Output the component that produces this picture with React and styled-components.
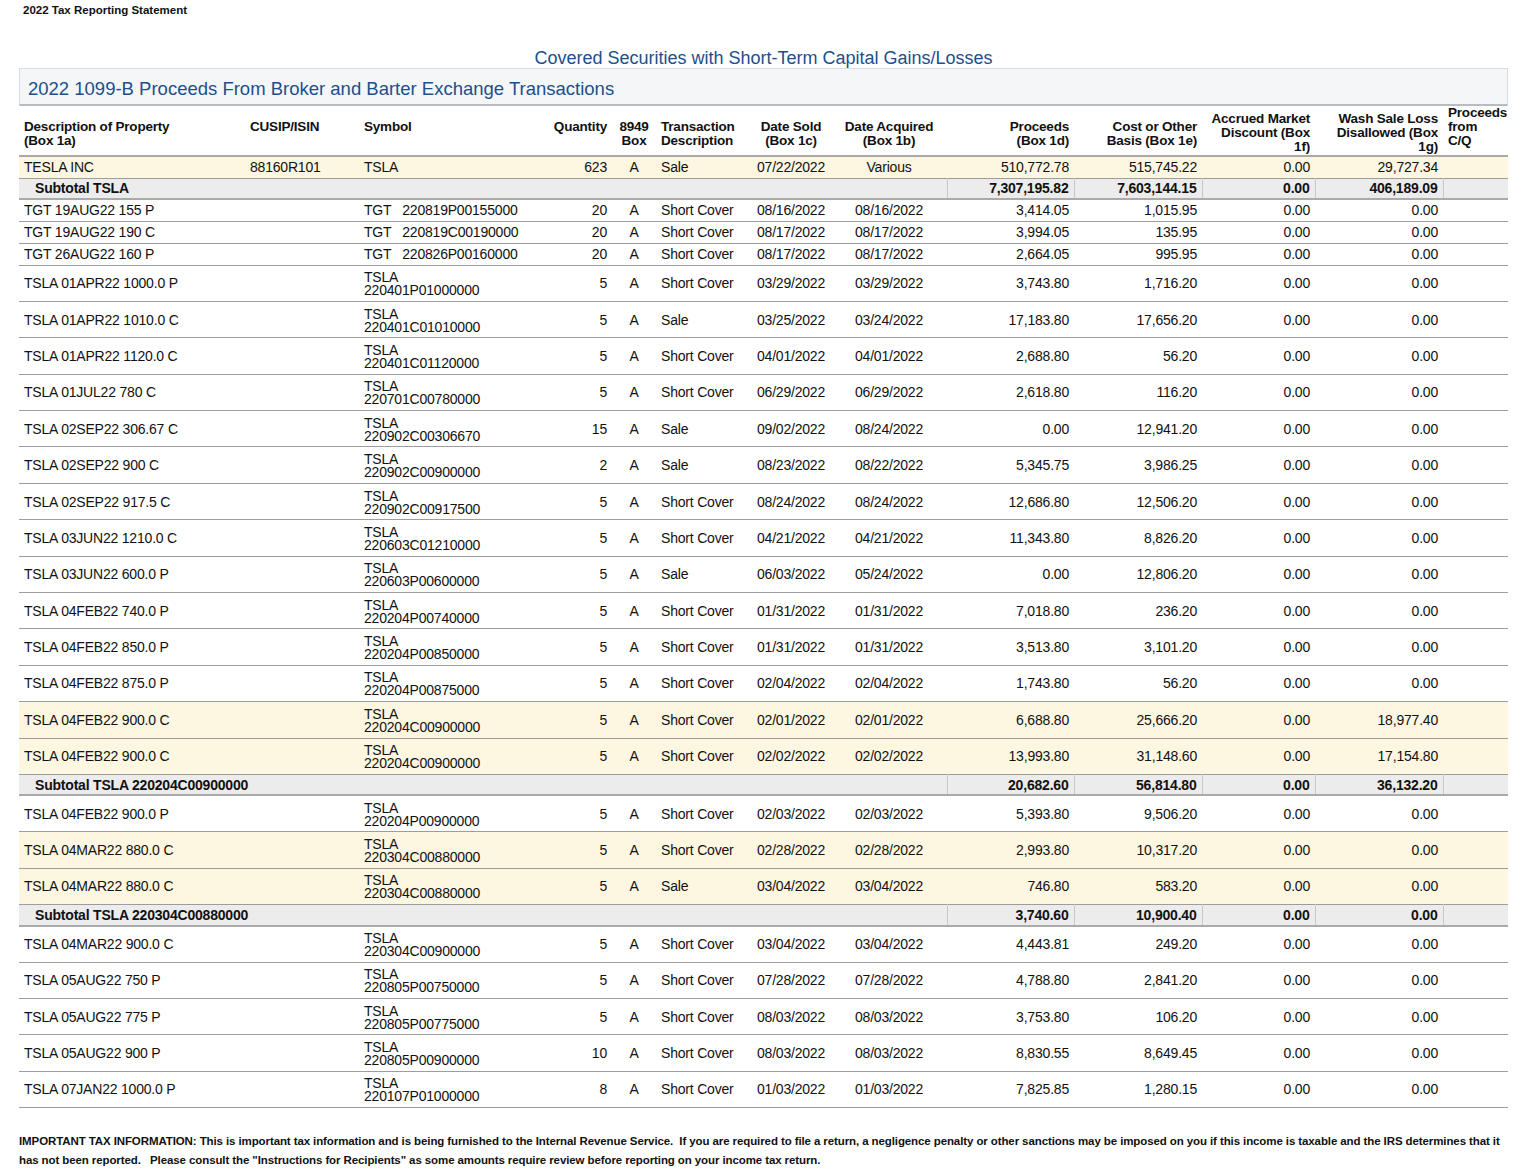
import React from "react";
import styled, { createGlobalStyle } from "styled-components";

const G = createGlobalStyle`
  body { margin: 0; background: #fff; font-family: "Liberation Sans", Arial, sans-serif; color: #111; }
`;
const Page = styled.div`width: 1536px; padding: 0 28px 0 19px; box-sizing: border-box;`;
const Top = styled.div`font-size: 11.5px; font-weight: bold; padding: 4px 0 0 4px; height: 44px; box-sizing: border-box;`;
const Covered = styled.div`text-align: center; color: #1c4f8c; font-size: 18px; height: 24px; line-height: 28px;`;
const Banner = styled.div`
  background: #f4f6f8; border: 1px solid #d8dde2; border-bottom: 2px solid #b8bcc0;
  color: #1c4f8c; font-size: 18.5px; padding: 8px 8px 3px; height: 24px; line-height: 24px;
`;
const Table = styled.table`
  width: 100%; border-collapse: collapse; table-layout: fixed; font-size: 14px; letter-spacing: -0.2px;
`;
const Th = styled.th`
  font-weight: bold; font-size: 13.5px; line-height: 14px; text-align: ${p => p.$a || "left"};
  vertical-align: bottom; padding: 0 5px 7px; height: 38px; border-bottom: 2px solid #aaa;
  ${p => p.$mid && "vertical-align: middle;"}
`;
const Tr = styled.tr`
  background: ${p => p.$hl ? "#fdf6e1" : p.$sub ? "#ececec" : "#fff"};
  height: ${p => p.$h}px;
  border-bottom: ${p => p.$sub ? "2px solid #aaa" : "1px solid #9d9d9d"};
  font-weight: ${p => p.$sub ? "bold" : "normal"};
`;
const Td = styled.td`
  padding: 0 5px; text-align: ${p => p.$a || "left"}; white-space: nowrap; vertical-align: middle;
  ${p => p.$bl && "border-left: 1px solid #c8c8c8;"}
`;
const Sym = styled.div`line-height: 13px; padding-top: 2px;`;
const Foot = styled.div`font-size: 11.5px; font-weight: bold; line-height: 19px; margin-top: 24px; letter-spacing: -0.1px;`;

const rows = [
  ["TGT 19AUG22 155 P","TGT   220819P00155000","20","Short Cover","08/16/2022","08/16/2022","3,414.05","1,015.95","0.00"],
  ["TGT 19AUG22 190 C","TGT   220819C00190000","20","Short Cover","08/17/2022","08/17/2022","3,994.05","135.95","0.00"],
  ["TGT 26AUG22 160 P","TGT   220826P00160000","20","Short Cover","08/17/2022","08/17/2022","2,664.05","995.95","0.00"],
  ["TSLA 01APR22 1000.0 P","220401P01000000","5","Short Cover","03/29/2022","03/29/2022","3,743.80","1,716.20","0.00"],
  ["TSLA 01APR22 1010.0 C","220401C01010000","5","Sale","03/25/2022","03/24/2022","17,183.80","17,656.20","0.00"],
  ["TSLA 01APR22 1120.0 C","220401C01120000","5","Short Cover","04/01/2022","04/01/2022","2,688.80","56.20","0.00"],
  ["TSLA 01JUL22 780 C","220701C00780000","5","Short Cover","06/29/2022","06/29/2022","2,618.80","116.20","0.00"],
  ["TSLA 02SEP22 306.67 C","220902C00306670","15","Sale","09/02/2022","08/24/2022","0.00","12,941.20","0.00"],
  ["TSLA 02SEP22 900 C","220902C00900000","2","Sale","08/23/2022","08/22/2022","5,345.75","3,986.25","0.00"],
  ["TSLA 02SEP22 917.5 C","220902C00917500","5","Short Cover","08/24/2022","08/24/2022","12,686.80","12,506.20","0.00"],
  ["TSLA 03JUN22 1210.0 C","220603C01210000","5","Short Cover","04/21/2022","04/21/2022","11,343.80","8,826.20","0.00"],
  ["TSLA 03JUN22 600.0 P","220603P00600000","5","Sale","06/03/2022","05/24/2022","0.00","12,806.20","0.00"],
  ["TSLA 04FEB22 740.0 P","220204P00740000","5","Short Cover","01/31/2022","01/31/2022","7,018.80","236.20","0.00"],
  ["TSLA 04FEB22 850.0 P","220204P00850000","5","Short Cover","01/31/2022","01/31/2022","3,513.80","3,101.20","0.00"],
  ["TSLA 04FEB22 875.0 P","220204P00875000","5","Short Cover","02/04/2022","02/04/2022","1,743.80","56.20","0.00"],
  ["TSLA 04FEB22 900.0 C","220204C00900000","5","Short Cover","02/01/2022","02/01/2022","6,688.80","25,666.20","18,977.40",1],
  ["TSLA 04FEB22 900.0 C","220204C00900000","5","Short Cover","02/02/2022","02/02/2022","13,993.80","31,148.60","17,154.80",1],
  ["SUB","Subtotal TSLA  220204C00900000","20,682.60","56,814.80","36,132.20"],
  ["TSLA 04FEB22 900.0 P","220204P00900000","5","Short Cover","02/03/2022","02/03/2022","5,393.80","9,506.20","0.00"],
  ["TSLA 04MAR22 880.0 C","220304C00880000","5","Short Cover","02/28/2022","02/28/2022","2,993.80","10,317.20","0.00",1],
  ["TSLA 04MAR22 880.0 C","220304C00880000","5","Sale","03/04/2022","03/04/2022","746.80","583.20","0.00",1],
  ["SUB","Subtotal TSLA  220304C00880000","3,740.60","10,900.40","0.00"],
  ["TSLA 04MAR22 900.0 C","220304C00900000","5","Short Cover","03/04/2022","03/04/2022","4,443.81","249.20","0.00"],
  ["TSLA 05AUG22 750 P","220805P00750000","5","Short Cover","07/28/2022","07/28/2022","4,788.80","2,841.20","0.00"],
  ["TSLA 05AUG22 775 P","220805P00775000","5","Short Cover","08/03/2022","08/03/2022","3,753.80","106.20","0.00"],
  ["TSLA 05AUG22 900 P","220805P00900000","10","Short Cover","08/03/2022","08/03/2022","8,830.55","8,649.45","0.00"],
  ["TSLA 07JAN22 1000.0 P","220107P01000000","8","Short Cover","01/03/2022","01/03/2022","7,825.85","1,280.15","0.00"],
];

const Sub = ({ label, p, c, w }) => (
  <Tr $sub $h={21}>
    <Td colSpan={8} style={{ paddingLeft: 16 }}>{label}</Td>
    <Td $a="right" $bl>{p}</Td><Td $a="right" $bl>{c}</Td><Td $a="right" $bl>0.00</Td><Td $a="right" $bl>{w}</Td><Td $bl />
  </Tr>
);

export default function App() {
  return (
    <Page>
      <G />
      <Top>2022 Tax Reporting Statement</Top>
      <Covered>Covered Securities with Short-Term Capital Gains/Losses</Covered>
      <Banner>2022 1099-B Proceeds From Broker and Barter Exchange Transactions</Banner>
      <Table>
        <colgroup>
          <col style={{ width: 226 }} /><col style={{ width: 114 }} /><col style={{ width: 170 }} />
          <col style={{ width: 83 }} /><col style={{ width: 44 }} /><col style={{ width: 95 }} />
          <col style={{ width: 80 }} /><col style={{ width: 116 }} /><col style={{ width: 127 }} />
          <col style={{ width: 128 }} /><col style={{ width: 113 }} /><col style={{ width: 128 }} /><col />
        </colgroup>
        <thead>
          <tr>
            <Th>Description of Property<br />(Box 1a)</Th>
            <Th $mid>CUSIP/ISIN</Th><Th $mid>Symbol</Th><Th $mid $a="right">Quantity</Th>
            <Th $a="center">8949<br />Box</Th><Th>Transaction<br />Description</Th>
            <Th $a="center">Date Sold<br />(Box 1c)</Th><Th $a="center">Date Acquired<br />(Box 1b)</Th>
            <Th $a="right">Proceeds<br />(Box 1d)</Th><Th $a="right">Cost or Other<br />Basis (Box 1e)</Th>
            <Th $a="right" style={{ paddingBottom: 1 }}>Accrued Market<br />Discount (Box<br />1f)</Th>
            <Th $a="right" style={{ paddingBottom: 1 }}>Wash Sale Loss<br />Disallowed (Box<br />1g)</Th>
            <Th>Proceeds<br />from C/Q</Th>
          </tr>
        </thead>
        <tbody>
          <Tr $hl $h={22}>
            <Td>TESLA INC</Td><Td>88160R101</Td><Td>TSLA</Td><Td $a="right">623</Td><Td $a="center">A</Td>
            <Td>Sale</Td><Td $a="center">07/22/2022</Td><Td $a="center">Various</Td>
            <Td $a="right">510,772.78</Td><Td $a="right">515,745.22</Td><Td $a="right">0.00</Td><Td $a="right">29,727.34</Td><Td />
          </Tr>
          <Sub label="Subtotal TSLA" p="7,307,195.82" c="7,603,144.15" w="406,189.09" />
          {rows.map((r, i) => {
            if (r[0] === "SUB") return <Sub key={i} label={r[1]} p={r[2]} c={r[3]} w={r[4]} />;
            const tgt = r[1].startsWith("TGT");
            return (
              <Tr key={i} $hl={!!r[9]} $h={tgt ? 22 : 36.4}>
                <Td>{r[0]}</Td><Td />
                <Td style={{ whiteSpace: "pre" }}>{tgt ? r[1] : <Sym>TSLA<br />{r[1]}</Sym>}</Td>
                <Td $a="right">{r[2]}</Td><Td $a="center">A</Td><Td>{r[3]}</Td>
                <Td $a="center">{r[4]}</Td><Td $a="center">{r[5]}</Td>
                <Td $a="right">{r[6]}</Td><Td $a="right">{r[7]}</Td><Td $a="right">0.00</Td><Td $a="right">{r[8]}</Td><Td />
              </Tr>
            );
          })}
        </tbody>
      </Table>
      <Foot>
        IMPORTANT TAX INFORMATION: This is important tax information and is being furnished to the Internal Revenue Service.&nbsp; If you are required to file a return, a negligence penalty or other sanctions may be imposed on you if this income is taxable and the IRS determines that it has not been reported.&nbsp;&nbsp; Please consult the "Instructions for Recipients" as some amounts require review before reporting on your income tax return.
      </Foot>
    </Page>
  );
}
